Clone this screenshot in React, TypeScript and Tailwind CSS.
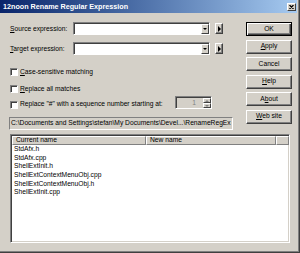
import React from "react";

function Btn({ children, def }: { children: React.ReactNode; def?: boolean }) {
  return (
    <div
      className={
        def
          ? "w-[46px] h-[14px] flex items-center justify-center bg-[#d4d0c8] border border-black shadow-[inset_1px_1px_#ffffff,inset_-1px_-1px_#404040,inset_-2px_-2px_#808080]"
          : "w-[46px] h-[14px] flex items-center justify-center bg-[#d4d0c8] border border-t-white border-l-white border-r-[#404040] border-b-[#404040] shadow-[inset_-1px_-1px_#808080]"
      }
    >
      <span className="leading-none">{children}</span>
    </div>
  );
}

function DownTri({ color = "black" }: { color?: string }) {
  return (
    <div
      className={
        color === "black"
          ? "w-0 h-0 border-l-[2px] border-r-[2px] border-t-[2px] border-l-transparent border-r-transparent border-t-black"
          : "w-0 h-0 border-l-[2px] border-r-[2px] border-t-[2px] border-l-transparent border-r-transparent border-t-[#808080]"
      }
    />
  );
}

function Combo() {
  return (
    <div className="w-[137px] h-[13px] bg-white border border-t-[#808080] border-l-[#808080] border-r-white border-b-white shadow-[inset_1px_1px_#404040] flex justify-end pt-[1px] pl-[1px]">
      <div className="w-[8px] h-full bg-[#d4d0c8] border border-t-white border-l-white border-r-[#404040] border-b-[#404040] flex items-center justify-center">
        <DownTri />
      </div>
    </div>
  );
}

function ArrowBtn() {
  return (
    <div className="ml-[5px] w-[8px] h-[11px] bg-[#d4d0c8] border border-t-white border-l-white border-r-[#404040] border-b-[#404040] shadow-[inset_-1px_-1px_#808080] flex items-center justify-center">
      <div className="w-0 h-0 border-t-[3px] border-b-[3px] border-l-[3px] border-t-transparent border-b-transparent border-l-black" />
    </div>
  );
}

function Check({ children }: { children: React.ReactNode }) {
  return (
    <div className="flex items-center h-[8px]">
      <div className="w-[8px] h-[8px] bg-white border border-t-[#808080] border-l-[#808080] border-r-white border-b-white shadow-[inset_1px_1px_#404040]" />
      <span className="ml-[2px]">{children}</span>
    </div>
  );
}

const rows = [
  "StdAfx.h",
  "StdAfx.cpp",
  "ShellExtInit.h",
  "ShellExtContextMenuObj.cpp",
  "ShellExtContextMenuObj.h",
  "ShellExtInit.cpp",
];

export default function App() {
  return (
    <div className="w-[300px] h-[253px] bg-[#d4d0c8] font-['Liberation_Sans',Arial,sans-serif] text-[6.7px] leading-none text-black border-r border-b border-r-[#404040] border-b-[#404040] overflow-hidden">
      <div className="w-full h-full border-r border-b border-r-[#808080] border-b-[#808080] pr-[1px] pb-[1px]">
        <div className="h-[13px] w-full flex items-center bg-linear-to-r from-[#0a246a] to-[#a6caf0]">
          <span className="pl-[3px] text-white font-bold text-[7.2px]">12noon Rename Regular Expression</span>
          <div className="ml-auto mr-[1px] w-[9px] h-[8px] bg-[#d4d0c8] border border-t-white border-l-white border-r-[#404040] border-b-[#404040] flex items-center justify-center">
            <svg width="5" height="4" viewBox="0 0 5 4">
              <path d="M0.5 0 L4.5 4 M4.5 0 L0.5 4" stroke="black" strokeWidth="1.2" />
            </svg>
          </div>
        </div>

        <div className="flex pl-[10px] pt-[9px]">
          <div className="w-[224px] flex flex-col">
            <div className="flex items-center h-[13px]">
              <span className="w-[63px] pt-[2px]">
                <span className="underline">S</span>ource expression:
              </span>
              <Combo />
              <ArrowBtn />
            </div>
            <div className="flex items-center h-[13px] mt-[7px]">
              <span className="w-[63px] pt-[2px]">
                <span className="underline">T</span>arget expression:
              </span>
              <Combo />
              <ArrowBtn />
            </div>
            <div className="mt-[13px]">
              <Check>
                <span className="underline">C</span>ase-sensitive matching
              </Check>
            </div>
            <div className="mt-[9px]">
              <Check>
                <span className="underline">R</span>eplace all matches
              </Check>
            </div>
            <div className="mt-[3px] h-[17px] flex items-center">
              <Check>Replace "#" with a sequence number starting at:</Check>
              <div className="self-start ml-auto mr-[22px] w-[37px] h-[13px] bg-[#d4d0c8] border border-t-[#808080] border-l-[#808080] border-r-white border-b-white shadow-[inset_1px_1px_#404040] flex items-stretch pt-[1px] pl-[1px]">
                <div className="flex-1 flex items-center justify-end pr-[7px] text-[#808080]">1</div>
                <div className="w-[8px] flex flex-col">
                  <div className="flex-1 bg-[#d4d0c8] border border-t-white border-l-white border-r-[#404040] border-b-[#404040] flex items-center justify-center">
                    <div className="w-0 h-0 border-l-[2px] border-r-[2px] border-b-[2px] border-l-transparent border-r-transparent border-b-[#808080]" />
                  </div>
                  <div className="flex-1 bg-[#d4d0c8] border border-t-white border-l-white border-r-[#404040] border-b-[#404040] flex items-center justify-center">
                    <DownTri color="grey" />
                  </div>
                </div>
              </div>
            </div>
            <div className="mt-[4px] -ml-[1px] w-[224px] h-[13px] border border-t-[#808080] border-l-[#808080] border-r-white border-b-white flex items-center pl-[1px] whitespace-nowrap overflow-hidden">
              C:\Documents and Settings\stefan\My Documents\Devel...\RenameRegEx
            </div>
          </div>

          <div className="ml-[12px] flex flex-col gap-[3.5px]">
            <Btn def>OK</Btn>
            <Btn>
              <span className="underline">A</span>pply
            </Btn>
            <Btn>Cancel</Btn>
            <Btn>
              <span className="underline">H</span>elp
            </Btn>
            <Btn>
              A<span className="underline">b</span>out
            </Btn>
            <Btn>
              <span className="underline">W</span>eb site
            </Btn>
          </div>
        </div>

        <div className="ml-[10px] mt-[4px] w-[280px] h-[109px] bg-white border border-t-[#808080] border-l-[#808080] border-r-white border-b-white shadow-[inset_1px_1px_#404040,inset_-1px_-1px_#d4d0c8] pt-[1px] pl-[1px] flex flex-col">
          <div className="flex h-[9px] bg-[#d4d0c8]">
            <div className="w-[134px] flex items-center pl-[3px] border border-t-white border-l-white border-r-[#808080] border-b-[#808080]">
              Current name
            </div>
            <div className="w-[130px] flex items-center pl-[3px] border border-t-white border-l-white border-r-[#808080] border-b-[#808080]">
              New name
            </div>
            <div className="flex-1 border border-t-white border-l-white border-r-[#808080] border-b-[#808080]" />
          </div>
          <div className="flex flex-col pl-[2px]">
            {rows.map((r) => (
              <div key={r} className="h-[8.7px] flex items-center">
                {r}
              </div>
            ))}
          </div>
        </div>
      </div>
    </div>
  );
}
